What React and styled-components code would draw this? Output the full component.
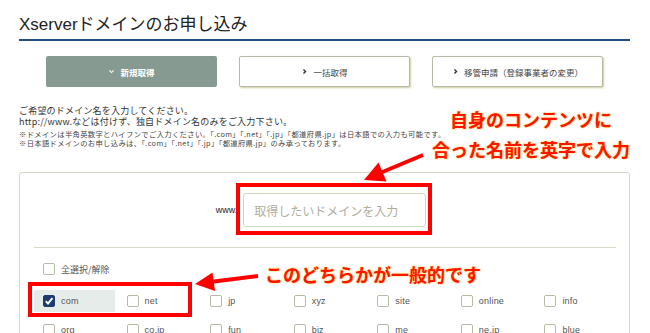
import React from "react";
import styled, { createGlobalStyle, css } from "styled-components";

const Global = createGlobalStyle`
  html, body { margin: 0; padding: 0; background: #fff; overflow: hidden; }
  body { font-family: "Liberation Sans", "Noto Sans CJK JP", sans-serif; color: #333; }
`;

const Page = styled.div`
  position: relative;
  width: 650px;
  height: 333px;
  overflow: hidden;
  box-sizing: border-box;
  padding: 0 20px 0 19px;
`;

const Title = styled.h1`
  margin: 0;
  padding: 14px 0 3px;
  font-size: 17px;
  line-height: 22px;
  font-weight: 400;
  color: #222;
  border-bottom: 2px solid #1f4f7e;
`;

const Tabs = styled.div`
  display: grid;
  grid-template-columns: repeat(3, 171px);
  column-gap: 22px;
  padding-left: 27px;
  margin-top: 15px;
`;

const Tab = styled.div`
  height: 31px;
  box-sizing: border-box;
  display: flex;
  align-items: center;
  justify-content: center;
  gap: 5px;
  font-family: "Noto Sans CJK JP", sans-serif;
  font-size: 8.5px;
  border-radius: 2px;
  ${(p) =>
    p.$active
      ? css`
          background: #879a91;
          color: #fff;
          font-weight: 700;
        `
      : css`
          background: #fff;
          border: 1px solid #b9b9a9;
          box-shadow: 1px 1px 2px rgba(170, 170, 100, 0.6);
          color: #444;
        `}
`;

const Intro = styled.p`
  margin: 18px 0 0;
  font-family: "Noto Sans CJK JP", sans-serif;
  font-size: 9px;
  line-height: 11px;
  letter-spacing: 0.2px;
  color: #333;
`;

const Notes = styled.p`
  margin: 2.5px 0 0;
  font-family: "Noto Sans CJK JP", sans-serif;
  font-size: 7.3px;
  line-height: 9px;
  letter-spacing: 0.35px;
  color: #444;
`;

const Panel = styled.div`
  margin-top: 24.5px;
  border: 1px solid #d8d8c4;
  border-radius: 3px;
  padding: 20px 13px 0 14px;
`;

const EntryRow = styled.div`
  display: flex;
  align-items: center;
  justify-content: center;
  gap: 6px;
  padding-right: 8px;
`;

const Www = styled.span`
  font-size: 9px;
  color: #222;
`;

const DomainInput = styled.input`
  width: 183px;
  height: 34px;
  box-sizing: border-box;
  border: 1px solid #d4d4bc;
  border-radius: 3px;
  padding: 0 10px;
  font-family: "Noto Sans CJK JP", sans-serif;
  font-size: 12px;
  outline: none;
  &::placeholder { color: #aeae9c; }
`;

const Divider = styled.div`
  margin-top: 20px;
  height: 1px;
  background: #d9d9c8;
`;

const SelectAll = styled.label`
  margin-top: 10px;
  height: 22px;
  padding-left: 9px;
  display: flex;
  align-items: center;
  gap: 6px;
  font-family: "Noto Sans CJK JP", sans-serif;
  font-size: 9px;
  color: #555;
`;

const TldGrid = styled.div`
  margin-top: 10px;
  display: grid;
  grid-template-columns: repeat(7, 1fr);
  column-gap: 3px;
  row-gap: 7px;
`;

const Cell = styled.label`
  height: 22px;
  padding-left: 9px;
  display: flex;
  align-items: center;
  gap: 6px;
  font-size: 9px;
  letter-spacing: 0.2px;
  color: #555;
  background: ${(p) => (p.$checked ? "#e5ecea" : "transparent")};
`;

const Box = styled.span`
  width: 12px;
  height: 12px;
  box-sizing: border-box;
  border-radius: 2px;
  flex: none;
  display: flex;
  align-items: center;
  justify-content: center;
  border: 1px solid ${(p) => (p.$checked ? "#1e3d6e" : "#b5bba5")};
  background: ${(p) => (p.$checked ? "#1e3d6e" : "#fff")};
`;

const RedFrame = styled.div`
  position: absolute;
  box-sizing: border-box;
  border: 4px solid #ff0000;
`;

const Callout = styled.div`
  position: absolute;
  font-family: "Noto Sans CJK JP", sans-serif;
  font-weight: 700;
  font-size: 18px;
  line-height: 30px;
  color: #ff1500;
  text-align: center;
  white-space: nowrap;
  text-shadow: 0 0 2px rgba(255, 190, 40, 0.8), 0 0 1px rgba(255, 220, 120, 0.9);
`;

const ArrowLayer = styled.svg`
  position: absolute;
  left: 0;
  top: 0;
  pointer-events: none;
`;

const Chevron = ({ dir, color }) => (
  <svg width="7" height="7" viewBox="0 0 10 10">
    {dir === "down" ? (
      <polyline points="2,3.5 5,6.5 8,3.5" fill="none" stroke={color} strokeWidth="1.6" />
    ) : (
      <polyline points="3.5,2 6.5,5 3.5,8" fill="none" stroke={color} strokeWidth="2" />
    )}
  </svg>
);

const Check = ({ checked }) => (
  <Box $checked={checked}>
    {checked && (
      <svg width="10" height="10" viewBox="0 0 10 10">
        <polyline points="1.8,5.2 4,7.6 8.4,2.2" fill="none" stroke="#fff" strokeWidth="1.9" />
      </svg>
    )}
  </Box>
);

const tlds = [
  "com", "net", "jp", "xyz", "site", "online", "info",
  "org", "co.jp", "fun", "biz", "me", "ne.jp", "blue",
];

export default function App() {
  return (
    <>
      <Global />
      <Page>
        <Title>Xserverドメインのお申し込み</Title>
        <Tabs>
          <Tab $active>
            <Chevron dir="down" color="#fff" />
            新規取得
          </Tab>
          <Tab>
            <Chevron dir="right" color="#333" />
            一括取得
          </Tab>
          <Tab>
            <Chevron dir="right" color="#333" />
            移管申請（登録事業者の変更）
          </Tab>
        </Tabs>
        <Intro>
          ご希望のドメイン名を入力してください。
          <br />
          http://www.などは付けず、独自ドメイン名のみをご入力下さい。
        </Intro>
        <Notes>
          ※ドメインは半角英数字とハイフンでご入力ください。「.com」「.net」「.jp」「都道府県.jp」は日本語での入力も可能です。
          <br />
          ※日本語ドメインのお申し込みは、「.com」「.net」「.jp」「都道府県.jp」のみ承っております。
        </Notes>
        <Panel>
          <EntryRow>
            <Www>www.</Www>
            <DomainInput placeholder="取得したいドメインを入力" />
          </EntryRow>
          <Divider />
          <SelectAll>
            <Check checked={false} />
            全選択/解除
          </SelectAll>
          <TldGrid>
            {tlds.map((t) => (
              <Cell key={t} $checked={t === "com"}>
                <Check checked={t === "com"} />
                {t}
              </Cell>
            ))}
          </TldGrid>
        </Panel>

        <RedFrame style={{ left: 236, top: 183, width: 196, height: 52 }} />
        <RedFrame style={{ left: 28, top: 282, width: 164, height: 35 }} />

        <Callout style={{ left: 431, top: 104, width: 200 }}>
          自身のコンテンツに
          <br />
          合った名前を英字で入力
        </Callout>
        <Callout style={{ left: 265, top: 259 }}>
          このどちらかが一般的です
        </Callout>

        <ArrowLayer width="650" height="333" viewBox="0 0 650 333">
          <line x1="423" y1="155" x2="380" y2="173" stroke="#ff0000" strokeWidth="4" />
          <polygon points="364,180 378.5,162.5 386.5,181.5" fill="#ff0000" />
          <line x1="258" y1="276" x2="210" y2="282" stroke="#ff0000" strokeWidth="4" />
          <polygon points="195,284 212.5,272.5 215,291" fill="#ff0000" />
        </ArrowLayer>
      </Page>
    </>
  );
}
